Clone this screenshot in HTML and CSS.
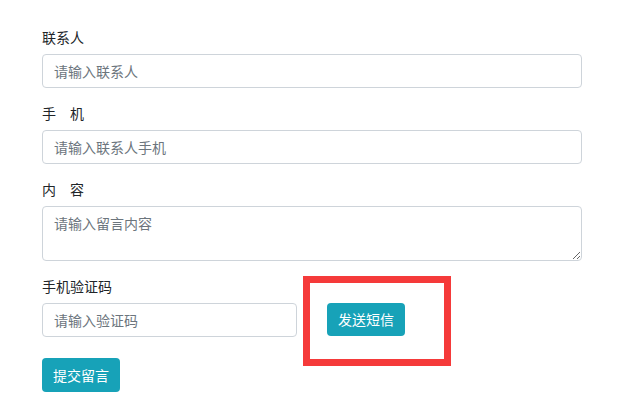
FILE: index.html
```html
<!DOCTYPE html>
<html lang="zh-CN">
<head>
<meta charset="utf-8">
<title>留言</title>
<link rel="stylesheet" href="styles.css">
</head>
<body>
<form class="form">
  <div class="group">
    <label class="label">联系人</label>
    <input class="control" type="text" placeholder="请输入联系人">
  </div>
  <div class="group">
    <label class="label">手　机</label>
    <input class="control" type="text" placeholder="请输入联系人手机">
  </div>
  <div class="group">
    <label class="label">内　容</label>
    <textarea class="control area" placeholder="请输入留言内容"></textarea>
  </div>
  <div class="group code-row">
    <div class="col">
      <label class="label">手机验证码</label>
      <input class="control" type="text" placeholder="请输入验证码">
    </div>
    <div class="col col-btn">
      <button type="button" class="btn">发送短信</button>
      <span class="highlight"></span>
    </div>
  </div>
  <div class="actions">
    <button type="button" class="btn">提交留言</button>
  </div>
</form>
</body>
</html>
```
FILE: styles.css
```css
* { box-sizing: border-box; }
html, body { margin: 0; background: #fff; }
body {
  font-family: "Noto Sans CJK SC", "Noto Sans", sans-serif;
  font-size: 14px;
  line-height: 20px;
  color: #212529;
}
.form {
  width: 540px;
  margin: 27px 0 0 42px;
}
.group { margin-bottom: 15px; }
.label {
  display: block;
  margin-bottom: 7px;
  line-height: 20px;
  font-size: 14px;
}
.control {
  display: block;
  width: 100%;
  height: 34px;
  padding: 6px 11px;
  font: inherit;
  line-height: 20px;
  color: #495057;
  background: #fff;
  border: 1px solid #ced4da;
  border-radius: 4px;
  outline: none;
}
.control::placeholder { color: #6c757d; opacity: 1; }
.area { height: 55px; resize: vertical; }
.code-row {
  display: grid;
  grid-template-columns: 255px 255px;
  column-gap: 30px;
  margin-bottom: 21px;
}
.col-btn {
  position: relative;
  padding-top: 27px;
}
.btn {
  display: inline-block;
  height: 33px;
  padding: 0 11px;
  font: inherit;
  font-size: 14px;
  line-height: 33px;
  color: #fff;
  background: #17a2b8;
  border: 0;
  border-radius: 4px;
}
.actions .btn { height: 34px; line-height: 34px; }
.highlight {
  position: absolute;
  left: -24px;
  top: 0;
  width: 148px;
  height: 90px;
  border: 7px solid #f53a3a;
}
```
